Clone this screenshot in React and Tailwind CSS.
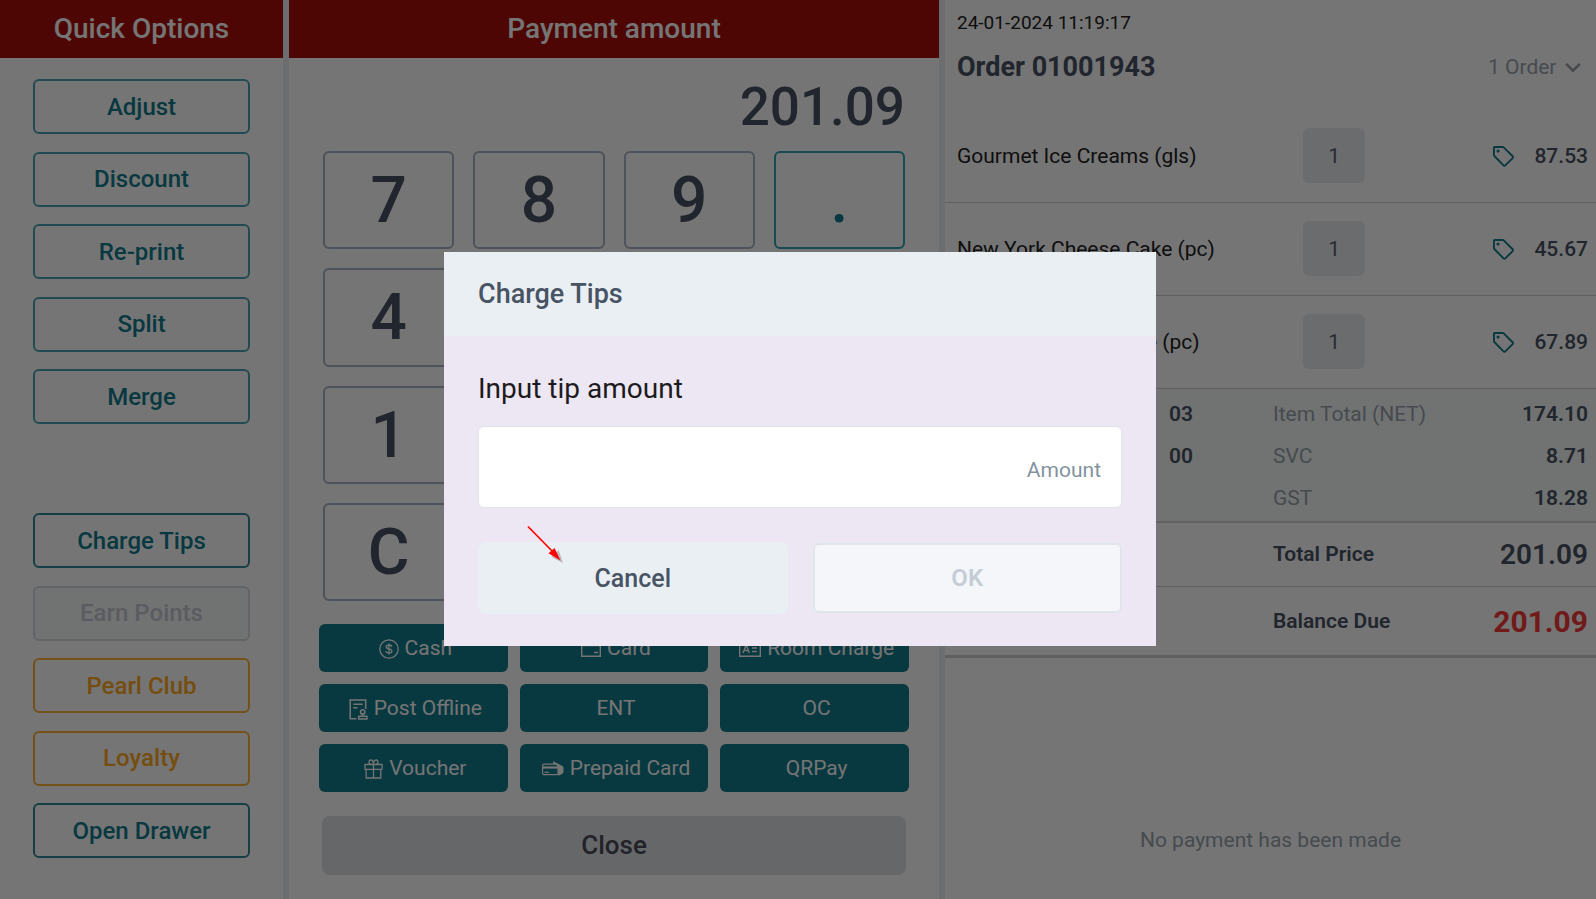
import React, { useState } from "react";

const OPTION_STYLES = {
    light: "border-[#4aa3b1] text-[#127a8c]",
    teal: "border-[#2f8797] text-[#127a8c]",
    orange: "border-[#fdb037] text-[#ffa81f]",
    disabled: "border-[#d6d9e1] bg-[#f5faf8] text-[#c6c9d3]"
};

const ORDER_OPTIONS = [
    { label: "Adjust", style: "light" },
    { label: "Discount", style: "light" },
    { label: "Re-print", style: "light" },
    { label: "Split", style: "light" },
    { label: "Merge", style: "light" }
];

const EXTRA_OPTIONS = [
    { label: "Charge Tips", style: "teal" },
    { label: "Earn Points", style: "disabled" },
    { label: "Pearl Club", style: "orange" },
    { label: "Loyalty", style: "orange" },
    { label: "Open Drawer", style: "teal" }
];

const KEYS = ["7", "8", "9", ".", "4", "5", "6", "0", "1", "2", "3", "00", "C", "20", "50", "100"];

const PAYMENTS = [
    { label: "Cash", icon: CashIcon },
    { label: "Card", icon: CardIcon },
    { label: "Room Charge", icon: RoomIcon },
    { label: "Post Offline", icon: PostIcon },
    { label: "ENT" },
    { label: "OC" },
    { label: "Voucher", icon: GiftIcon },
    { label: "Prepaid Card", icon: PrepaidIcon },
    { label: "QRPay" }
];

const ITEMS = [
    { name: "Gourmet Ice Creams (gls)", qty: 1, price: "87.53" },
    { name: "New York Cheese Cake (pc)", qty: 1, price: "45.67" },
    { name: "Chocolate Plum Cake (pc)", qty: 1, price: "67.89" }
];

const TOTALS = [
    { side: "Total Items", sideValue: "03", label: "Item Total (NET)", value: "174.10" },
    { side: "Covers", sideValue: "00", label: "SVC", value: "8.71" },
    { label: "GST", value: "18.28" }
];

function CashIcon() {
    return (
        <svg width="20" height="20" viewBox="0 0 20 20" fill="none" stroke="currentColor" strokeWidth="1.3" aria-hidden="true">
            <circle cx="10" cy="10" r="9.2" />
            <path d="M12.8 7.8c-.2-1.2-1.3-1.8-2.8-1.8s-2.7.7-2.7 1.9c0 1.3 1.2 1.7 2.7 2s2.9.8 2.9 2.2c0 1.2-1.2 2-2.9 2s-2.9-.8-3-2.1M10 4.5v11" />
        </svg>
    );
}

function CardIcon() {
    return (
        <svg width="20" height="16" viewBox="0 0 20 16" fill="none" stroke="currentColor" strokeWidth="1.4" aria-hidden="true">
            <path d="M.7.7h18.6v14.6H.7zM.7 4.5h18.6M13 11.5h4" />
        </svg>
    );
}

function RoomIcon() {
    return (
        <svg width="22" height="16" viewBox="0 0 22 16" fill="none" stroke="currentColor" strokeWidth="1.4" aria-hidden="true">
            <path d="M.7.7h20.6v14.6H.7zM4 12l3.2-8 3.2 8M5.2 9.5h4M13 7h5M13 10.5h5" />
        </svg>
    );
}

function PostIcon() {
    return (
        <svg width="19" height="21" viewBox="0 0 19 21" fill="none" stroke="currentColor" strokeWidth="1.5" aria-hidden="true">
            <path d="M7.5 19.8H1.200V1h15.500v9M4.200 5.300h9.500M4.200 8.800h4.300" />
            <circle cx="13.7" cy="12.9" r="2.2" />
            <path d="M13.7 15.100v2M9.700 17.200h8.200v2.900H9.700z" />
        </svg>
    );
}

function GiftIcon() {
    return (
        <svg width="19" height="20" viewBox="0 0 19 20" fill="none" stroke="currentColor" strokeWidth="1.3" aria-hidden="true">
            <path d="M1 5.500h17v4.800H1zM2.200 10.300v8.700h14.600v-8.700M9.500 5.500V19M9.500 5.500C6.500 5.500 5 4.600 5 3a1.900 1.900 0 0 1 2-2c1.700 0 2.500 2 2.500 4.500ZM9.500 5.500C12.500 5.500 14 4.600 14 3a1.900 1.900 0 0 0-2-2c-1.700 0-2.500 2-2.500 4.500Z" />
        </svg>
    );
}

function PrepaidIcon() {
    return (
        <svg width="22" height="17" viewBox="0 0 22 17" fill="none" aria-hidden="true">
            <rect x=".6" y="3.2" width="15.4" height="10.4" rx="1.2" stroke="currentColor" strokeWidth="1.2" />
            <path d="M.6 5.4H16v2.200H.6z" fill="currentColor" />
            <path d="M2.500 11.300H7" stroke="currentColor" strokeWidth="1.2" />
            <path d="M11 .2 20 4.800c1 .5 1.500 1.300 1.500 2.300v3.600c0 .9-.4 1.500-1.200 2l-2.500 1.500h-2.400c.5-.6.700-1.200.700-2V7.200c0-1.600-.7-2.500-2-3.200L11 2.400z" fill="currentColor" />
        </svg>
    );
}

function TagIcon() {
    return (
        <svg width="21" height="21" viewBox="0 0 20 20" fill="none" stroke="currentColor" strokeWidth="1.8" strokeLinejoin="round" aria-hidden="true">
            <path d="M.9 1.600V8.500c0 .4.100.7.400 1l8.700 9c.5.500 1.200.5 1.700 0l7-7c.5-.5.500-1.200 0-1.700L10.200 1.300c-.3-.3-.6-.4-1-.4H1.600a.7.700 0 0 0-.7.700Z" />
            <circle cx="4.8" cy="4.8" r="1.5" fill="currentColor" stroke="none" />
        </svg>
    );
}

function OptionGroup({ options }) {
    return (
        <div className="flex h-[345px] flex-col justify-between">
            {options.map((option) => (
                <button
                    key={option.label}
                    type="button"
                    disabled={option.style === "disabled"}
                    className={`h-[55px] w-full rounded-md border-2 text-2xl font-medium ${OPTION_STYLES[option.style]}`}
                >
                    {option.label}
                </button>
            ))}
        </div>
    );
}

function QuickOptions() {
    return (
        <aside className="bg-white">
            <h2 className="flex h-[58px] items-center justify-center bg-[#a90f07] text-[28px] font-medium text-white">Quick Options</h2>
            <div className="flex flex-col gap-[89px] px-[33px] pt-[21px]">
                <OptionGroup options={ORDER_OPTIONS} />
                <OptionGroup options={EXTRA_OPTIONS} />
            </div>
        </aside>
    );
}

function PaymentPanel() {
    return (
        <main className="bg-white">
            <h2 className="flex h-[58px] items-center justify-center bg-[#a90f07] text-[28px] font-medium text-white">Payment amount</h2>
            <div className="px-[34px]">
                <div className="flex h-[93px] items-center justify-end pt-1.5 text-[53px] font-medium text-[#485364]">201.09</div>
                <div className="grid h-[450px] grid-cols-4 grid-rows-4 gap-[19px]">
                    {KEYS.map((key) => (
                        <button
                            key={key}
                            type="button"
                            className={`rounded-md border-2 pt-0.5 text-[64px] leading-none font-medium ${
                                key === "." ? "border-[#2ea3b4] text-[#127a8c]" : "border-[#a5b5c5] text-[#485364]"
                            }`}
                        >
                            {key}
                        </button>
                    ))}
                </div>
            </div>
            <div className="mt-[23px] grid grid-cols-3 gap-3 px-[30px]">
                {PAYMENTS.map(({ label, icon: Icon }) => (
                    <button
                        key={label}
                        type="button"
                        className="flex h-12 items-center justify-center gap-1.5 rounded-md bg-[#127a8c] pt-0.5 pl-1 text-[21px] whitespace-nowrap text-white"
                    >
                        {Icon && <Icon />}
                        {label}
                    </button>
                ))}
            </div>
            <div className="px-[33px] pt-6 pb-6">
                <button type="button" className="h-[59px] w-full rounded-lg bg-[#dfe1e5] text-[26px] font-medium text-[#484c5a]">
                    Close
                </button>
            </div>
        </main>
    );
}

function OrderPanel() {
    return (
        <section className="flex flex-col bg-white">
            <header className="pt-3 pb-2 pl-3">
                <p className="text-[19px] leading-[22px] text-[#222222]">24-01-2024 11:19:17</p>
                <div className="flex h-[67px] items-center justify-between pr-[15px]">
                    <h1 className="text-[27px] font-bold text-[#485364]">Order 01001943</h1>
                    <label className="flex items-center gap-2 text-[21px] text-[#99a3ae]">
                        <select aria-label="Orders" className="appearance-none bg-transparent">
                            <option>1 Order</option>
                        </select>
                        <svg width="16" height="11" viewBox="0 0 16 11" fill="none" stroke="currentColor" strokeWidth="2.6" aria-hidden="true">
                            <path d="m1.200 1.800 6.800 6.800 6.800-6.800" />
                        </svg>
                    </label>
                </div>
            </header>

            <table className="w-full table-fixed">
                <tbody>
                    {ITEMS.map((item) => (
                        <tr key={item.name} className="h-[93px] border-b border-[#cfcfcf] text-[21px]">
                            <td className="w-[55%] pt-0.5 pl-3 text-[#222222]">{item.name}</td>
                            <td className="w-[10%]">
                                <div className="flex h-[55px] w-[62px] items-center justify-center rounded-md bg-[#e9ebf0] pt-0.5 text-[#5a6070]">
                                    {item.qty}
                                </div>
                            </td>
                            <td className="pt-0.5 pr-2">
                                <div className="flex items-center justify-end gap-5">
                                    <span className="text-[#127a8c]"><TagIcon /></span>
                                    <span className="font-medium text-[#485364]">{item.price}</span>
                                </div>
                            </td>
                        </tr>
                    ))}
                </tbody>
            </table>

            <div className="border-b-2 border-[#d6d9d8] bg-[#f5faf8] pt-[5px] pb-px text-[21px]">
                {TOTALS.map((row) => (
                    <dl key={row.label} className="grid h-[42px] grid-cols-[328fr_323fr] items-center">
                        <div className="flex justify-between pr-20 pl-3">
                            <dt className="text-[#99a3ae]">{row.side}</dt>
                            <dd className="font-semibold text-[#485364]">{row.sideValue}</dd>
                        </div>
                        <div className="flex justify-between pr-2">
                            <dt className="text-[#99a3ae]">{row.label}</dt>
                            <dd className="font-semibold text-[#485364]">{row.value}</dd>
                        </div>
                    </dl>
                ))}
            </div>
            <dl className="grid h-16 grid-cols-[328fr_323fr] items-center border-b border-[#cfcfcf] pt-0.5 text-[#485364]">
                <div className="col-start-2 flex items-center justify-between pr-2">
                    <dt className="text-[21px] font-semibold">Total Price</dt>
                    <dd className="text-[28px] font-semibold">201.09</dd>
                </div>
            </dl>
            <dl className="grid h-[71px] grid-cols-[328fr_323fr] items-center border-b-[3px] border-[#cfcfcf] pt-0.5 text-[#485364]">
                <div className="col-start-2 flex items-center justify-between pr-2">
                    <dt className="text-[21px] font-semibold">Balance Due</dt>
                    <dd className="text-[30px] font-bold text-[#f43c3a]">201.09</dd>
                </div>
            </dl>

            <div className="flex flex-1 items-end justify-center pb-[46px] text-[21px] leading-[26px] text-[#99a3ae]">
                No payment has been made
            </div>
        </section>
    );
}

function ChargeTipsDialog() {
    const [amount, setAmount] = useState("");

    return (
        <div className="fixed inset-0 flex items-center justify-center bg-black/54 pb-0.5 pl-1">
            <div role="dialog" aria-labelledby="tips-title" className="relative w-[712px] bg-[#ede7f3]">
                <h2 id="tips-title" className="flex h-[84px] items-center bg-[#eaeff4] px-[34px] pt-0.5 text-[27px] font-medium text-[#485364]">
                    Charge Tips
                </h2>
                <form className="px-[34px] pt-8 pb-8">
                    <label htmlFor="tip-amount" className="block h-[58px] text-[28px] leading-[42px] text-[#1d1b20]">
                        Input tip amount
                    </label>
                    <input
                        id="tip-amount"
                        type="text"
                        value={amount}
                        onChange={(e) => setAmount(e.target.value)}
                        placeholder="Amount"
                        className="block h-[82px] w-full rounded-md border border-[#dfe3ea] bg-white px-5 pt-1.5 text-right text-[21px] text-[#485364] outline-none placeholder:text-[#84929f]"
                    />
                    <div className="mt-[34px] grid grid-cols-2 items-center gap-[25px]">
                        <button type="button" className="h-[72px] rounded-lg bg-[#eaeff4] pt-0.5 text-[25px] font-medium text-[#485364]">
                            Cancel
                        </button>
                        <button
                            type="submit"
                            disabled
                            className="h-[70px] rounded-md border-2 border-[#e0e5ea] bg-[#f4f6f9] text-2xl font-semibold text-[#c4cdd7]"
                        >
                            OK
                        </button>
                    </div>
                </form>
                {/* pointer to the cancel action */}
                <svg className="pointer-events-none absolute top-[273px] left-[83px]" width="38" height="40" viewBox="0 0 38 40" aria-hidden="true">
                    <path d="m36 38-11.500-6 7-7z" fill="#9a93a0" opacity=".6" />
                    <path d="M1 1.500 26 27" stroke="#ff0000" strokeWidth="1.7" />
                    <path d="M33.500 35.500 21.500 28.300l6-5.300z" fill="#ff0000" />
                </svg>
            </div>
        </div>
    );
}

export default function App() {
    return (
        <div className="grid min-h-screen grid-cols-[283fr_6px_650fr_6px_651fr] bg-[#ebedf2] font-[Roboto,sans-serif]">
            <QuickOptions />
            <div />
            <PaymentPanel />
            <div />
            <OrderPanel />
            <ChargeTipsDialog />
        </div>
    );
}
